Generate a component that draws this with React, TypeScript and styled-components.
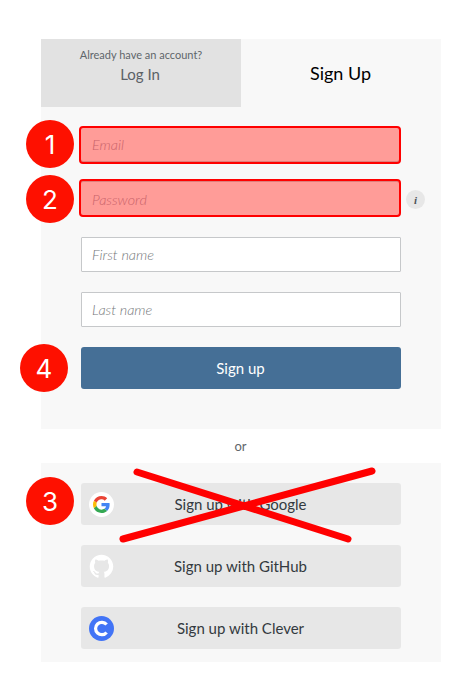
import React from "react";
import styled, { createGlobalStyle } from "styled-components";

const Global = createGlobalStyle`
  html, body { margin: 0; padding: 0; background: #fff; }
  body { font-family: Lato, "Liberation Sans", sans-serif; }
  * { box-sizing: border-box; }
`;

const Page = styled.div`
  position: relative;
  width: 475px;
  height: 682px;
  padding: 39px 0 0 41px;
  overflow: hidden;
`;

const Panel = styled.section`
  width: 400px;
  background: #f8f8f8;
`;

const Tabs = styled.div`
  display: flex;
  height: 68px;
`;

const InactiveTab = styled.div`
  width: 200px;
  background: #e2e2e2;
  display: flex;
  flex-direction: column;
  align-items: center;
  padding: 8px 2px 0 0;
`;

const TabHint = styled.span`
  font-size: 11px;
  line-height: 15px;
  margin-left: 2px;
  color: #5f666b;
`;

const TabLabel = styled.span`
  font-size: 15px;
  line-height: 20px;
  margin-top: 2px;
  color: #5b6166;
`;

const ActiveTab = styled.div`
  width: 200px;
  display: flex;
  justify-content: center;
  padding: 22px 1px 0 0;
  font-size: 18px;
  line-height: 24px;
  color: #000;
`;

const Form = styled.div`
  display: flex;
  flex-direction: column;
  padding: 19px 40px 40px;
`;

const FieldRow = styled.div<{ $error?: boolean; $gap: number }>`
  position: relative;
  height: ${(p) => (p.$error ? 38 : 35)}px;
  margin-bottom: ${(p) => p.$gap}px;
  margin-left: ${(p) => (p.$error ? -2 : 0)}px;
  width: ${(p) => (p.$error ? 322 : 320)}px;
`;

const Input = styled.div<{ $error?: "top" | "bottom" }>`
  height: 100%;
  display: flex;
  align-items: center;
  font-size: 14.4px;
  font-style: italic;
  font-weight: 300;
  padding-left: ${(p) => (p.$error ? 11 : 10)}px;
  padding-bottom: ${(p) => (p.$error === "bottom" ? 2 : 0)}px;
  padding-top: ${(p) => (p.$error === "top" ? 2 : 0)}px;
  background: ${(p) => (p.$error ? "#ff9c98" : "#fff")};
  color: ${(p) => (p.$error ? "#c9636a" : "#75787b")};
  border: ${(p) => (p.$error ? "2px solid #f00" : "1px solid #c6c8ca")};
  border-radius: ${(p) => (p.$error ? 4 : 1)}px;
  box-shadow: ${(p) =>
    p.$error === "bottom"
      ? "inset 0 -1px 0 #dd7f7c"
      : p.$error === "top"
        ? "inset 0 1px 0 #dd7f7c"
        : "none"};
`;

const InfoDot = styled.span`
  position: absolute;
  left: 327px;
  top: 11px;
  width: 19px;
  height: 19px;
  border-radius: 50%;
  background: #e7e7e7;
  color: #4d5358;
  font-family: "Liberation Serif", serif;
  font-style: italic;
  font-weight: 700;
  font-size: 11px;
  display: flex;
  align-items: center;
  justify-content: center;
`;

const Button = styled.div`
  height: 42px;
  width: 320px;
  padding-right: 1px;
  background: #456f96;
  border-radius: 3px;
  color: #fff;
  font-size: 15px;
  display: flex;
  align-items: center;
  justify-content: center;
`;

const Or = styled.div`
  width: 400px;
  height: 34px;
  padding-right: 1px;
  display: flex;
  align-items: center;
  justify-content: center;
  font-size: 13px;
  color: #5f666b;
`;

const Socials = styled(Panel)`
  display: flex;
  flex-direction: column;
  gap: 20px;
  padding: 20px 40px 13px;
`;

const SocialButton = styled.div`
  position: relative;
  height: 42px;
  width: 320px;
  padding-right: 1px;
  background: #e7e7e7;
  border-radius: 3px;
  color: #333a40;
  font-size: 15px;
  display: flex;
  align-items: center;
  justify-content: center;
`;

const SocialIcon = styled.span`
  position: absolute;
  left: 8px;
  top: 9px;
  width: 25px;
  height: 25px;
  display: flex;
`;

const Badge = styled.div<{ $x: number; $y: number }>`
  position: absolute;
  left: ${(p) => p.$x - 24}px;
  top: ${(p) => p.$y - 24}px;
  width: 48px;
  height: 48px;
  border-radius: 50%;
  background: #fe1000;
  color: #fff;
  font-family: Inter, "Liberation Sans", sans-serif;
  font-size: 26px;
  display: flex;
  align-items: center;
  justify-content: center;
`;

const Cross = styled.svg`
  position: absolute;
  left: 0;
  top: 0;
  width: 475px;
  height: 682px;
  pointer-events: none;
`;

const GoogleIcon = () => (
  <svg width="25" height="25" viewBox="0 0 25 25">
    <circle cx="12.5" cy="12.5" r="12.5" fill="#fff" />
    <g transform="translate(4 4) scale(0.354)">
      <path fill="#EA4335" d="M24 9.5c3.54 0 6.71 1.22 9.21 3.6l6.85-6.85C35.9 2.38 30.47 0 24 0 14.62 0 6.51 5.38 2.56 13.22l7.98 6.19C12.43 13.72 17.74 9.5 24 9.5z" />
      <path fill="#4285F4" d="M46.98 24.55c0-1.57-.15-3.09-.38-4.55H24v9.02h12.94c-.58 2.96-2.26 5.48-4.78 7.18l7.73 6c4.51-4.18 7.09-10.36 7.09-17.65z" />
      <path fill="#FBBC05" d="M10.53 28.59c-.48-1.45-.76-2.99-.76-4.59s.27-3.14.76-4.59l-7.98-6.19C.92 16.46 0 20.12 0 24c0 3.88.92 7.54 2.56 10.78l7.97-6.19z" />
      <path fill="#34A853" d="M24 48c6.48 0 11.93-2.13 15.89-5.81l-7.73-6c-2.15 1.45-4.92 2.3-8.16 2.3-6.26 0-11.57-4.22-13.47-9.91l-7.98 6.19C6.51 42.62 14.62 48 24 48z" />
    </g>
  </svg>
);

const GithubIcon = () => (
  <svg width="25" height="25" viewBox="-0.5 -0.5 17 17">
    <path fill="#fff" d="M8 0C3.58 0 0 3.58 0 8c0 3.54 2.29 6.53 5.47 7.59.4.07.55-.17.55-.38 0-.19-.01-.82-.01-1.49-2.01.37-2.53-.49-2.69-.94-.09-.23-.48-.94-.82-1.13-.28-.15-.68-.52-.01-.53.63-.01 1.08.58 1.23.82.72 1.21 1.87.87 2.33.66.07-.52.28-.87.51-1.07-1.78-.2-3.64-.89-3.64-3.95 0-.87.31-1.59.82-2.15-.08-.2-.36-1.02.08-2.12 0 0 .67-.21 2.2.82.64-.18 1.32-.27 2-.27.68 0 1.36.09 2 .27 1.53-1.04 2.2-.82 2.2-.82.44 1.1.16 1.92.08 2.12.51.56.82 1.27.82 2.15 0 3.07-1.87 3.75-3.65 3.95.29.25.54.73.54 1.48 0 1.07-.01 1.93-.01 2.2 0 .21.15.46.55.38A8.013 8.013 0 0016 8c0-4.42-3.58-8-8-8z" />
  </svg>
);

const CleverIcon = () => (
  <svg width="25" height="25" viewBox="0 0 25 25">
    <circle cx="12.5" cy="12.5" r="12.5" fill="#4274f6" />
    <path d="M17.6 8.6a6.2 6.2 0 1 0 0 7.8" fill="none" stroke="#fff" strokeWidth="3.2" />
  </svg>
);

export default function App() {
  return (
    <Page>
      <Global />
      <Panel>
        <Tabs>
          <InactiveTab>
            <TabHint>Already have an account?</TabHint>
            <TabLabel>Log In</TabLabel>
          </InactiveTab>
          <ActiveTab>Sign Up</ActiveTab>
        </Tabs>
        <Form>
          <FieldRow $error $gap={15}>
            <Input $error="bottom">Email</Input>
          </FieldRow>
          <FieldRow $error $gap={20}>
            <Input $error="top">Password</Input>
            <InfoDot>i</InfoDot>
          </FieldRow>
          <FieldRow $gap={20}>
            <Input>First name</Input>
          </FieldRow>
          <FieldRow $gap={20}>
            <Input>Last name</Input>
          </FieldRow>
          <Button>Sign up</Button>
        </Form>
      </Panel>
      <Or>or</Or>
      <Socials>
        <SocialButton>
          <SocialIcon><GoogleIcon /></SocialIcon>
          Sign up with Google
        </SocialButton>
        <SocialButton>
          <SocialIcon><GithubIcon /></SocialIcon>
          Sign up with GitHub
        </SocialButton>
        <SocialButton>
          <SocialIcon><CleverIcon /></SocialIcon>
          Sign up with Clever
        </SocialButton>
      </Socials>
      <Cross viewBox="0 0 475 682">
        <line x1="137" y1="472" x2="348" y2="539" stroke="#f00" strokeWidth="7" strokeLinecap="round" />
        <line x1="372" y1="471" x2="123" y2="539" stroke="#f00" strokeWidth="7" strokeLinecap="round" />
      </Cross>
      <Badge $x={50} $y={144}>1</Badge>
      <Badge $x={50} $y={199}>2</Badge>
      <Badge $x={50} $y={501}>3</Badge>
      <Badge $x={44} $y={368}>4</Badge>
    </Page>
  );
}
